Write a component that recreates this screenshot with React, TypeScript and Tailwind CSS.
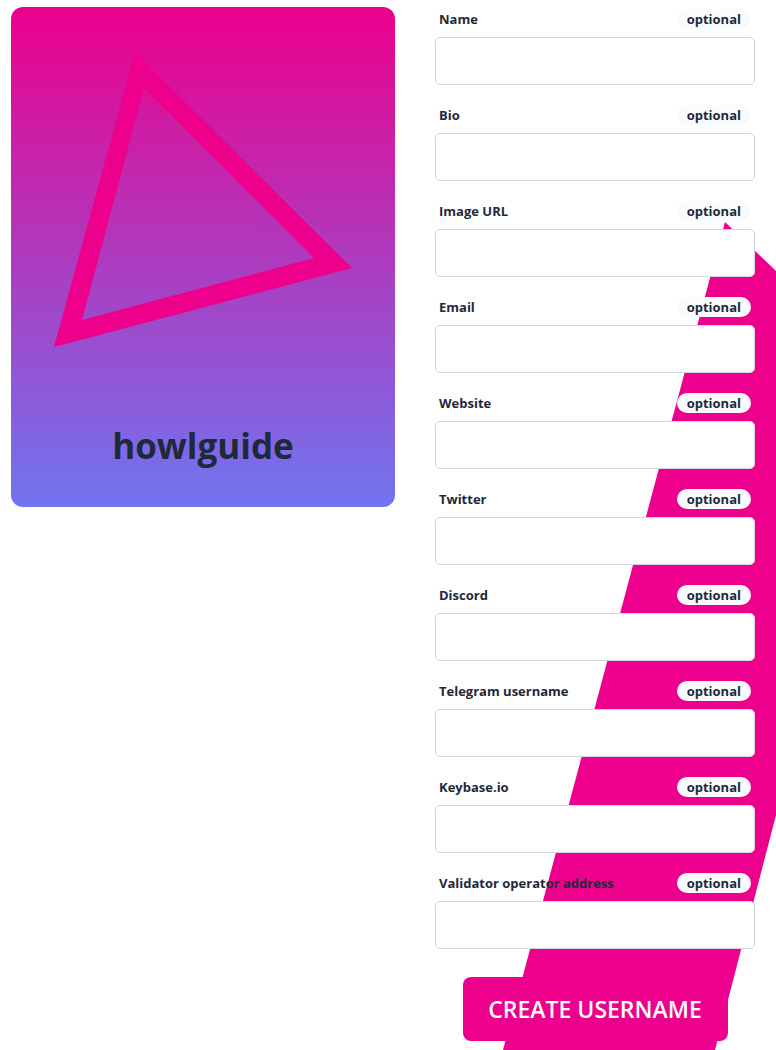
import { FC } from "react";

const fields = [
  "Name",
  "Bio",
  "Image URL",
  "Email",
  "Website",
  "Twitter",
  "Discord",
  "Telegram username",
  "Keybase.io",
  "Validator operator address",
];

const Field: FC<{ label: string }> = ({ label }) => {
  return (
    <div className="flex flex-col gap-2">
      <div className="flex items-center justify-between h-5">
        <span className="pl-1 pt-px text-[13px] font-bold text-gray-800">
          {label}
        </span>
        <span className="mr-1 px-[10px] h-5 leading-5 rounded-full bg-gray-50 text-[13px] font-bold text-gray-800">
          optional
        </span>
      </div>
      <input
        type="text"
        className="h-12 w-full rounded-[5px] border border-gray-300 bg-white px-3 outline-none"
      />
    </div>
  );
};

const HowlCard: FC = () => {
  return (
    <div className="relative flex flex-col items-center w-[384px] h-[500px] rounded-xl bg-[linear-gradient(to_bottom,#ec008c,#7075f0)]">
      <svg
        className="absolute left-0 top-0"
        width="384"
        height="360"
        viewBox="0 0 384 360"
      >
        <path
          fillRule="evenodd"
          fill="#ec008c"
          d="M124 45 L341 261 L43 340 Z M133 81 L71 313 L303 251 Z"
        />
      </svg>
      <h2 className="mt-auto mb-[35px] text-[35px] font-bold text-gray-800">
        howlguide
      </h2>
    </div>
  );
};

export default function App() {
  return (
    <div
      className="relative min-h-[1050px] overflow-hidden bg-white"
      style={{ fontFamily: '"Open Sans", "Noto Sans", sans-serif' }}
    >
      {/* pink slash behind the form */}
      <svg
        className="absolute left-0 top-0 z-0"
        width="776"
        height="1050"
        viewBox="0 0 776 1050"
      >
        <polygon
          fill="#ec008c"
          points="725,222 776,271 776,815 715,1050 503,1050"
        />
      </svg>

      <div className="relative z-10 flex gap-10 pl-[11px] pt-[7px]">
        <HowlCard />
        <div className="flex flex-col w-[320px] pt-[2px]">
          <div className="flex flex-col gap-5">
            {fields.map((f) => (
              <Field key={f} label={f} />
            ))}
          </div>
          <div className="flex justify-center mt-7">
            <button className="w-[265px] h-16 rounded-lg bg-[#ec008c] text-[23px] font-semibold text-white">
              CREATE USERNAME
            </button>
          </div>
        </div>
      </div>
    </div>
  );
}
